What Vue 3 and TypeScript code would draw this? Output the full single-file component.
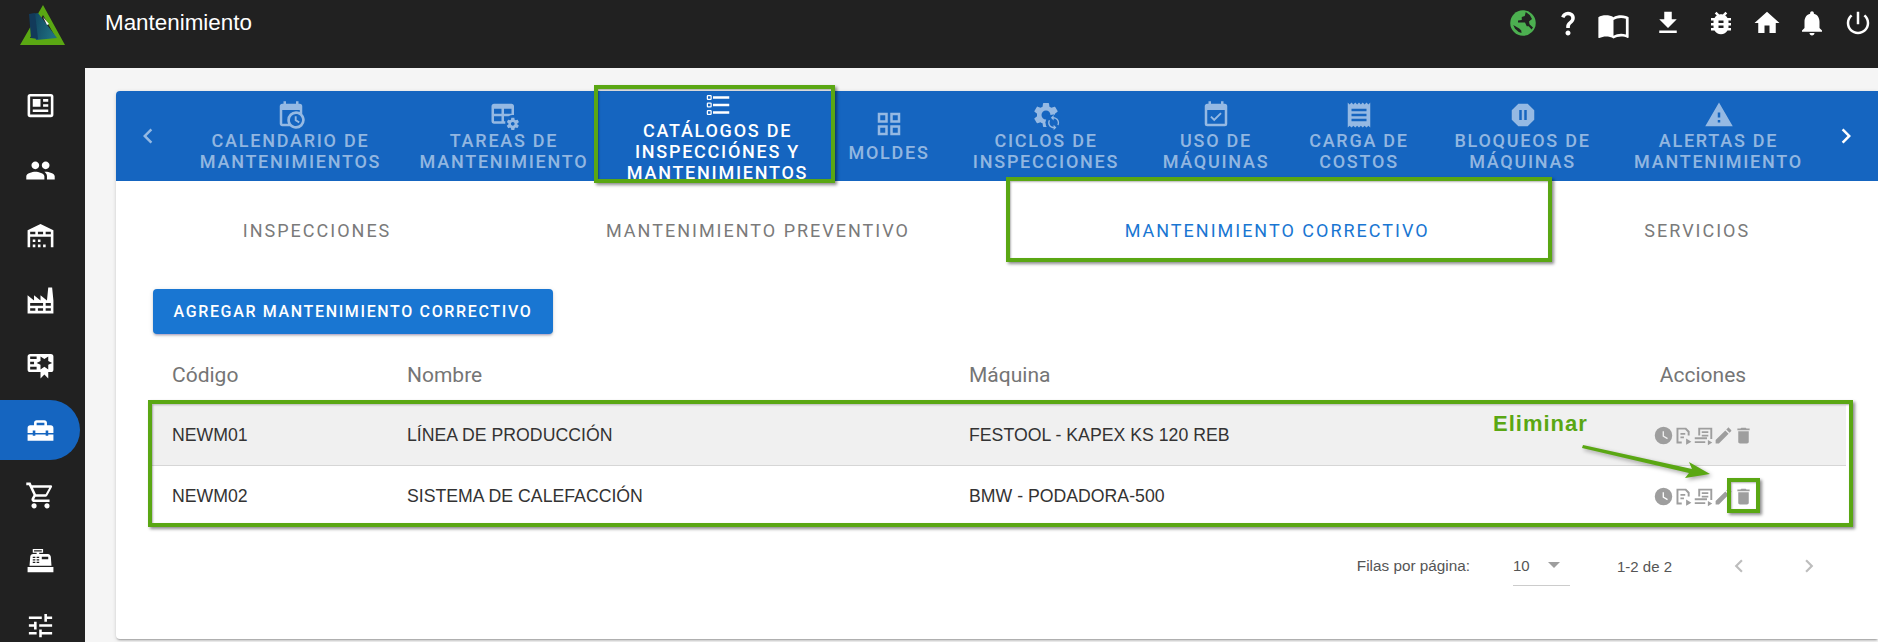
<script setup lang="ts">
interface TabItem { lines: string[]; icon: string; width: number; active?: boolean; cog?: boolean; solo?: boolean }

const I = {
  news: 'M4 3h16a2 2 0 0 1 2 2v14a2 2 0 0 1-2 2H4a2 2 0 0 1-2-2V5a2 2 0 0 1 2-2zm0 2v14h16V5H4zm2 2h6v6H6V7zm8 0h4v2h-4V7zm0 4h4v2h-4v-2zm-8 4h12v2H6v-2z',
  people: 'M16 11c1.66 0 2.99-1.34 2.99-3S17.66 5 16 5c-1.66 0-3 1.34-3 3s1.34 3 3 3zm-8 0c1.66 0 2.99-1.34 2.99-3S9.66 5 8 5C6.34 5 5 6.34 5 8s1.34 3 3 3zm0 2c-2.33 0-7 1.17-7 3.5V19h14v-2.5c0-2.33-4.67-3.5-7-3.5zm8 0c-.29 0-.62.02-.97.05 1.16.84 1.97 1.97 1.97 3.45V19h6v-2.5c0-2.33-4.67-3.5-7-3.5z',
  warehouse: 'M6 19H8V21H6V19M12 3L2 8V21H4V13H20V21H22V8L12 3M8 11H4V9H8V11M14 11H10V9H14V11M20 11H16V9H20V11M6 15H8V17H6V15M10 15H12V17H10V15M10 19H12V21H10V19M14 19H16V21H14V19Z',
  factory: 'M4,18V20H8V18H4M4,14V16H14V14H4M10,18V20H14V18H10M16,14V16H20V14H16M16,18V20H20V18H16M2,22V8L7,12V8L12,12V8L17,12L18,2H21L22,12V22H2Z',
  cert: 'M4,3C2.89,3 2,3.89 2,5V15A2,2 0 0,0 4,17H12V22L15,19L18,22V17H20A2,2 0 0,0 22,15V8L22,6V5A2,2 0 0,0 20,3H16V3H4M12,5L15,7L18,5V8.5L21,10L18,11.5V15L15,13L12,15V11.5L9,10L12,8.5V5M4,5H9V7H4V5M4,9H7V11H4V9M4,13H9V15H4V13Z',
  toolbox: 'M18 16H16V15H8V16H6V15H2V20H22V15H18V16M20 8H17V6C17 4.9 16.1 4 15 4H9C7.9 4 7 4.9 7 6V8H4C2.9 8 2 8.9 2 10V14H6V12H8V14H16V12H18V14H22V10C22 8.9 21.1 8 20 8M15 8H9V6H15V8Z',
  cart: 'M17,18A2,2 0 0,1 19,20A2,2 0 0,1 17,22C15.89,22 15,21.1 15,20C15,18.89 15.89,18 17,18M1,2H4.27L5.21,4H20A1,1 0 0,1 21,5C21,5.17 20.95,5.34 20.88,5.5L17.3,11.97C16.96,12.58 16.3,13 15.55,13H8.1L7.2,14.63L7.17,14.75A0.25,0.25 0 0,0 7.42,15H19V17H7C5.89,17 5,16.1 5,15C5,14.65 5.09,14.32 5.24,14.04L6.6,11.59L3,4H1V2M7,18A2,2 0 0,1 9,20A2,2 0 0,1 7,22C5.89,22 5,21.1 5,20C5,18.89 5.89,18 7,18M16,11L18.78,6H6.14L8.5,11H16Z',
  register: 'M2,17H22V21H2V17M6.25,7H9V6H6V3H14V6H11V7H17.8C18.8,7 19.8,8 20,9L20.5,16H3.5L4.05,9C4.05,8 5.05,7 6.25,7M13,9V11H18V9H13M6,9V10H8V9H6M9,9V10H11V9H9M6,11V12H8V11H6M9,11V12H11V11H9M6,13V14H8V13H6M9,13V14H11V13H9M7,4V5H13V4H7Z',
  tune: 'M3 17v2h6v-2H3zM3 5v2h10V5H3zm10 16v-2h8v-2h-8v-2h-2v6h2zM7 9v2H3v2h4v2h2V9H7zm14 4v-2H11v2h10zm-6-4h2V7h4V5h-4V3h-2v6z',
  calClock: 'M15,13H16.5V15.82L18.94,17.23L18.19,18.53L15,16.69V13M19,8H5V19H9.67C9.24,18.09 9,17.07 9,16A7,7 0 0,1 16,9C17.07,9 18.09,9.24 19,9.67V8M5,21C3.89,21 3,20.1 3,19V5C3,3.89 3.89,3 5,3H6V1H8V3H16V1H18V3H19A2,2 0 0,1 21,5V11.1C22.24,12.36 23,14.09 23,16A7,7 0 0,1 16,23C14.09,23 12.36,22.24 11.1,21H5M16,11.15A4.85,4.85 0 0,0 11.15,16C11.15,18.68 13.32,20.85 16,20.85A4.85,4.85 0 0,0 20.85,16C20.85,13.32 18.68,11.15 16,11.15Z',
  tableCog: 'M4 3H18C19.11 3 20 3.9 20 5V12.08C18.45 11.82 16.92 12.18 15.68 13H12V17H13.08C12.97 17.68 12.97 18.35 13.08 19H4C2.9 19 2 18.11 2 17V5C2 3.9 2.9 3 4 3M4 7V11H10V7H4M12 7V11H18V7H12M4 13V17H10V13H4M23.8 20.4C23.9 20.4 23.9 20.5 23.8 20.6L22.8 22.3C22.7 22.4 22.6 22.4 22.5 22.4L21.3 22C21 22.2 20.8 22.3 20.5 22.5L20.3 23.8C20.3 23.9 20.2 24 20.1 24H18.1C18 24 17.9 23.9 17.8 23.8L17.6 22.5C17.3 22.4 17 22.2 16.8 22L15.6 22.5C15.5 22.5 15.4 22.5 15.3 22.4L14.3 20.7C14.2 20.6 14.3 20.5 14.4 20.4L15.5 19.6V18.6L14.4 17.8C14.3 17.7 14.3 17.6 14.3 17.5L15.3 15.8C15.4 15.7 15.5 15.7 15.6 15.7L16.8 16.2C17.1 16 17.3 15.9 17.6 15.7L17.8 14.4C17.8 14.3 17.9 14.2 18.1 14.2H20.1C20.2 14.2 20.3 14.3 20.3 14.4L20.5 15.7C20.8 15.8 21.1 16 21.4 16.2L22.6 15.7C22.7 15.7 22.9 15.7 22.9 15.8L23.9 17.5C24 17.6 23.9 17.7 23.8 17.8L22.7 18.6V19.6L23.8 20.4M20.5 19C20.5 18.2 19.8 17.5 19 17.5S17.5 18.2 17.5 19 18.2 20.5 19 20.5 20.5 19.8 20.5 19Z',
  listCheck: 'M21,19V17H8V19H21M21,13V11H8V13H21M8,7H21V5H8V7M4,5V7H6V5H4M3,5A1,1 0 0,1 4,4H6A1,1 0 0,1 7,5V7A1,1 0 0,1 6,8H4A1,1 0 0,1 3,7V5M4,11V13H6V11H4M3,11A1,1 0 0,1 4,10H6A1,1 0 0,1 7,11V13A1,1 0 0,1 6,14H4A1,1 0 0,1 3,13V11M4,17V19H6V17H4M3,17A1,1 0 0,1 4,16H6A1,1 0 0,1 7,17V19A1,1 0 0,1 6,20H4C3.45,20 3,19.55 3,19V17Z',
  grid: 'M3 11H11V3H3M5 5H9V9H5M13 21H21V13H13M15 15H19V19H15M3 21H11V13H3M5 15H9V19H5M13 3V11H21V3M19 9H15V5H19Z',
  gear: 'M19.14 12.94c.04-.3.06-.61.06-.94 0-.32-.02-.64-.07-.94l2.03-1.58c.18-.14.23-.41.12-.61l-1.92-3.32c-.12-.22-.37-.29-.59-.22l-2.39.96c-.5-.38-1.03-.7-1.62-.94l-.36-2.54c-.04-.24-.24-.41-.48-.41h-3.84c-.24 0-.43.17-.47.41l-.36 2.54c-.59.24-1.13.57-1.62.94l-2.39-.96c-.22-.08-.47 0-.59.22L2.74 8.87c-.12.21-.08.47.12.61l2.03 1.58c-.05.3-.09.63-.09.94s.02.64.07.94l-2.03 1.58c-.18.14-.23.41-.12.61l1.92 3.32c.12.22.37.29.59.22l2.39-.96c.5.38 1.03.7 1.62.94l.36 2.54c.05.24.24.41.48.41h3.84c.24 0 .44-.17.47-.41l.36-2.54c.59-.24 1.13-.56 1.62-.94l2.39.96c.22.08.47 0 .59-.22l1.92-3.32c.12-.22.07-.47-.12-.61l-2.01-1.58zM12 15.6c-1.98 0-3.6-1.62-3.6-3.6s1.62-3.6 3.6-3.6 3.6 1.62 3.6 3.6-1.62 3.6-3.6 3.6z',
  sync: 'M12 4V1L8 5l4 4V6c3.31 0 6 2.69 6 6 0 1.01-.25 1.97-.7 2.8l1.46 1.46C19.54 15.03 20 13.57 20 12c0-4.42-3.58-8-8-8zm0 14c-3.31 0-6-2.69-6-6 0-1.01.25-1.97.7-2.8L5.24 7.74C4.46 8.97 4 10.43 4 12c0 4.42 3.58 8 8 8v3l4-4-4-4v3z',
  calCheck: 'M19 19H5V8H19M16 1V3H8V1H6V3H5C3.89 3 3 3.89 3 5V19A2 2 0 0 0 5 21H19A2 2 0 0 0 21 19V5A2 2 0 0 0 19 3H18V1M16.53 11.06L15.47 10L10.59 14.88L8.47 12.76L7.41 13.82L10.59 17L16.53 11.06Z',
  receipt: 'M3,22L4.5,20.5L6,22L7.5,20.5L9,22L10.5,20.5L12,22L13.5,20.5L15,22L16.5,20.5L18,22L19.5,20.5L21,22V2L19.5,3.5L18,2L16.5,3.5L15,2L13.5,3.5L12,2L10.5,3.5L9,2L7.5,3.5L6,2L4.5,3.5L3,2M18,9H6V7H18M18,13H6V11H18M18,17H6V15H18V17Z',
  pause: 'M15.73,3L21,8.27V15.73L15.73,21H8.27L3,15.73V8.27L8.27,3H15.73M15,16V8H13V16H15M11,16V8H9V16H11Z',
  warning: 'M1 21h22L12 2 1 21zm12-3h-2v-2h2v2zm0-4h-2v-4h2v4z',
  clock: 'M12,2A10,10 0 0,0 2,12A10,10 0 0,0 12,22A10,10 0 0,0 22,12A10,10 0 0,0 12,2M16.2,16.2L11,13V7H12.5V12.2L17,14.9L16.2,16.2Z',
  doc1: 'M4 3h11l4 4v5h-2.2V8.4L13.8 5.2H6.2v13.6H10V21H4V3zm4.5 6H14v2H8.5V9zm0 4h4v2h-4v-2zM15 15.5l6 3.5-6 3.5v-7z',
  doc2: 'M6 3h16v13h-2.2V5.2H8.2V12H6V3zm4 4h7.5v2H10V7zm0 4h7.5v2H10v-2zM2 14h14v2.2H2V14zm0 4.5h12v2.2H2v-2.2zM17 17l5 3-5 3v-6z',
  pencil: 'M3 17.25V21h3.75L17.81 9.94l-3.75-3.75L3 17.25zM20.71 7.04c.39-.39.39-1.02 0-1.41l-2.34-2.34c-.39-.39-1.02-.39-1.41 0l-1.83 1.83 3.75 3.75 1.83-1.83z',
  trash: 'M6 19c0 1.1.9 2 2 2h8c1.1 0 2-.9 2-2V7H6v12zM19 4h-3.5l-1-1h-5l-1 1H5v2h14V4z',
  globeLand: 'M14.2 3.2 13.4 6.4 11 7.2V9.6L8 10v1.6h5.6L15 14.6h1.6L18.8 17.2 20 15.6 17.2 13 16.8 10.8 19.2 8.8 17.4 5.6zM4.2 13.6 9 16.4 10.6 18 10.8 20 8.6 19.2 5.6 16.6z',
  help: 'M11.07 12.85c.77-1.39 2.25-2.21 3.11-3.44.91-1.29.4-3.7-2.18-3.7-1.69 0-2.52 1.28-2.87 2.34L6.54 6.96C7.25 4.83 9.18 3 11.99 3c2.35 0 3.96 1.07 4.78 2.41.7 1.15 1.11 3.3.03 4.9-1.2 1.77-2.35 2.31-2.97 3.45-.25.46-.35.76-.35 2.24h-2.89c-.01-.78-.13-2.05.48-3.15zM14 20c0 1.1-.9 2-2 2s-2-.9-2-2 .9-2 2-2 2 .9 2 2z',
  book: 'M21 5c-1.11-.35-2.33-.5-3.5-.5-1.95 0-4.05.4-5.5 1.5-1.45-1.1-3.55-1.5-5.5-1.5S2.45 4.9 1 6v14.65c0 .25.25.5.5.5.1 0 .15-.05.25-.05C3.1 20.45 5.05 20 6.5 20c1.95 0 4.05.4 5.5 1.5 1.35-.85 3.8-1.5 5.5-1.5 1.65 0 3.35.3 4.75 1.05.1.05.15.05.25.05.25 0 .5-.25.5-.5V6c-.6-.45-1.25-.75-2-1zm0 13.5c-1.1-.35-2.3-.5-3.5-.5-1.7 0-4.15.65-5.5 1.5V8c1.35-.85 3.8-1.5 5.5-1.5 1.2 0 2.4.15 3.5.5v11.5z',
  download: 'M19 9h-4V3H9v6H5l7 7 7-7zM5 18v2h14v-2H5z',
  bug: 'M20 8h-2.81c-.45-.78-1.07-1.45-1.82-1.96L17 4.41 15.59 3l-2.17 2.17C12.96 5.06 12.49 5 12 5c-.49 0-.96.06-1.41.17L8.41 3 7 4.41l1.62 1.63C7.88 6.55 7.26 7.22 6.81 8H4v2h2.09c-.05.33-.09.66-.09 1v1H4v2h2v1c0 .34.04.67.09 1H4v2h2.81c1.04 1.79 2.97 3 5.19 3s4.15-1.21 5.19-3H20v-2h-2.09c.05-.33.09-.66.09-1v-1h2v-2h-2v-1c0-.34-.04-.67-.09-1H20V8zm-6 8h-4v-2h4v2zm0-4h-4v-2h4v2z',
  home: 'M10 20v-6h4v6h5v-8h3L12 3 2 12h3v8z',
  bell: 'M12 22c1.1 0 2-.9 2-2h-4c0 1.1.89 2 2 2zm6-6v-5c0-3.07-1.64-5.64-4.5-6.32V4c0-.83-.67-1.5-1.5-1.5s-1.5.67-1.5 1.5v.68C7.63 5.36 6 7.92 6 11v5l-2 2v1h16v-1l-2-2z',
  power: 'M13 3h-2v10h2V3zm4.83 2.17l-1.42 1.42C17.99 7.86 19 9.81 19 12c0 3.87-3.13 7-7 7s-7-3.13-7-7c0-2.19 1.01-4.14 2.58-5.42L6.17 5.17C4.23 6.82 3 9.26 3 12c0 4.97 4.03 9 9 9s9-4.03 9-9c0-2.74-1.23-5.18-3.17-6.83z',
  chevL: 'M15.41 7.41 14 6l-6 6 6 6 1.41-1.41L10.83 12z',
  chevR: 'M10 6 8.59 7.41 13.17 12l-4.58 4.59L10 18l6-6z',
}

const headerIcons = [
  { d: I.help, cls: 'hi-help' }, { d: I.book, cls: 'hi-book' },
  { d: I.download, cls: 'hi-dl' }, { d: I.bug, cls: 'hi-bug' }, { d: I.home, cls: 'hi-home' },
  { d: I.bell, cls: 'hi-bell' }, { d: I.power, cls: 'hi-power' },
]
const navIcons = [I.news, I.people, I.warehouse, I.factory, I.cert, I.toolbox, I.cart, I.register, I.tune]
const activeNav = 5

const tabs: TabItem[] = [
  { lines: ['CALENDARIO DE', 'MANTENIMIENTOS'], icon: I.calClock, width: 221 },
  { lines: ['TAREAS DE', 'MANTENIMIENTO'], icon: I.tableCog, width: 206 },
  { lines: ['CATÁLOGOS DE', 'INSPECCIÓNES Y', 'MANTENIMIENTOS'], icon: I.listCheck, width: 221, active: true },
  { lines: ['MOLDES'], icon: I.grid, width: 122, solo: true },
  { lines: ['CICLOS DE', 'INSPECCIONES'], icon: I.gear, width: 192, cog: true },
  { lines: ['USO DE', 'MÁQUINAS'], icon: I.calCheck, width: 148 },
  { lines: ['CARGA DE', 'COSTOS'], icon: I.receipt, width: 138 },
  { lines: ['BLOQUEOS DE', 'MÁQUINAS'], icon: I.pause, width: 189 },
  { lines: ['ALERTAS DE', 'MANTENIMIENTO'], icon: I.warning, width: 203 },
]
const subTabs = ['INSPECCIONES', 'MANTENIMIENTO PREVENTIVO', 'MANTENIMIENTO CORRECTIVO', 'SERVICIOS']
const rows = [
  { code: 'NEWM01', name: 'LÍNEA DE PRODUCCIÓN', machine: 'FESTOOL - KAPEX KS 120 REB' },
  { code: 'NEWM02', name: 'SISTEMA DE CALEFACCIÓN', machine: 'BMW - PODADORA-500' },
]
const actions = [I.clock, I.doc1, I.doc2, I.pencil, I.trash]
</script>

<template>
  <div class="app">
    <header class="topbar">
      <div class="logo-cell">
        <svg class="logo" viewBox="0 0 45 40" width="45" height="40">
          <defs>
            <linearGradient id="sail" x1="0" y1="0" x2="1" y2="0.3">
              <stop offset="0" stop-color="#0f3f5c" />
              <stop offset="1" stop-color="#1f6f80" />
            </linearGradient>
          </defs>
          <path d="M23 0 45 40H0L23 0zm0 10L10 33h26L23 10z" fill="#5aa713" fill-rule="evenodd" />
          <path d="M11 9 18 8 37 33 16 35z" fill="url(#sail)" />
          <path d="M9 9 15 8 18 34 11 33z" fill="#123a5a" />
          <path d="M23 12 29 19 27 20z" fill="#fff" />
        </svg>
      </div>
      <div class="title">Mantenimiento</div>
      <div class="top-icons">
        <svg class="top-icon hi-globe" viewBox="0 0 24 24">
          <circle cx="12" cy="12" r="10.2" fill="#4caf50" />
          <path :d="I.globeLand" fill="#212121" />
        </svg>
        <svg v-for="h in headerIcons" :key="h.cls" :class="['top-icon', h.cls]" viewBox="0 0 24 24"><path :d="h.d" /></svg>
      </div>
    </header>

    <div class="body">
      <nav class="sidebar">
        <div v-for="(d, i) in navIcons" :key="i" :class="['nav-item', { active: i === activeNav }]">
          <svg viewBox="0 0 24 24" width="31" height="31"><path :d="d" fill="#fff" /></svg>
        </div>
      </nav>

      <main class="main">
        <section class="card">
          <div class="tabbar">
            <div class="chev chev-dim"><svg viewBox="0 0 24 24" width="30" height="30"><path :d="I.chevL" /></svg></div>
            <div v-for="t in tabs" :key="t.lines[0]" :class="['tab', { active: t.active, solo: t.solo }]" :style="{ width: t.width + 'px' }">
              <svg class="tab-icon" viewBox="0 0 24 24">
                <path :d="t.icon" />
                <template v-if="t.cog">
                  <circle cx="18" cy="18" r="6.5" fill="#1565c0" />
                  <path :d="I.sync" transform="translate(11.5 11.5) scale(.55)" />
                </template>
              </svg>
              <span v-for="l in t.lines" :key="l" class="tab-line">{{ l }}</span>
            </div>
            <div class="chev chev-right"><svg viewBox="0 0 24 24" width="30" height="30"><path :d="I.chevR" /></svg></div>
          </div>

          <div class="subtabs">
            <div v-for="(s, i) in subTabs" :key="s" :class="['subtab', { on: i === 2 }]">{{ s }}</div>
          </div>

          <button class="add-btn" type="button">AGREGAR MANTENIMIENTO CORRECTIVO</button>

          <div class="table">
            <div class="row head">
              <div>Código</div><div>Nombre</div><div>Máquina</div><div class="act-cell">Acciones</div>
            </div>
            <div v-for="(r, i) in rows" :key="r.code" :class="['row', 'data', { hl: i === 0 }]">
              <div>{{ r.code }}</div><div>{{ r.name }}</div><div>{{ r.machine }}</div>
              <div class="act-cell icons">
                <svg v-for="(a, j) in actions" :key="j" viewBox="0 0 24 24" width="21" height="21"><path :d="a" fill="#9e9e9e" /></svg>
              </div>
            </div>
          </div>

          <div class="pager">
            <span class="pg-label">Filas por página:</span>
            <div class="pg-select"><span>10</span><i class="caret"></i></div>
            <span class="pg-range">1-2 de 2</span>
            <svg class="pg-prev" viewBox="0 0 24 24" width="26" height="26"><path :d="I.chevL" fill="#bdbdbd" /></svg>
            <svg class="pg-next" viewBox="0 0 24 24" width="26" height="26"><path :d="I.chevR" fill="#bdbdbd" /></svg>
          </div>
        </section>
      </main>
    </div>

    <!-- annotation layer drawn on top of the screenshot -->
    <div class="mark m-tab"></div>
    <div class="mark m-sub"></div>
    <div class="mark m-rows"></div>
    <div class="mark m-trash"></div>
    <div class="note">Eliminar</div>
    <svg class="arrow" viewBox="0 0 140 40" width="140" height="40">
      <path d="M3 3 112 27 109 20 130 32 105 36 109 31 2 6z" fill="#5aa713" />
    </svg>
  </div>
</template>

<style>
html, body { margin: 0; background: #f5f5f5; }
</style>

<style scoped>
.app { position: relative; width: 1878px; height: 642px; overflow: hidden; font-family: Roboto, "Liberation Sans", sans-serif; background: #f5f5f5; }
.topbar { display: flex; align-items: flex-start; height: 68px; background: #212121; color: #fff; }
.logo-cell { width: 105px; padding: 5px 0 0 20px; box-sizing: border-box; flex: none; }
.logo { display: block; }
.title { font-family: "Liberation Sans", Arial, sans-serif; font-size: 22.4px; line-height: 26px; margin-top: 10px; }
.top-icons { margin-left: auto; display: flex; align-items: center; height: 46px; padding-right: 5px; }
.top-icon { fill: #fff; width: 30px; height: 30px; display: block; margin-left: 15.5px; }
.hi-globe { margin-left: 0; }
.hi-help { margin-left: 15px; }
.hi-book { width: 33px; height: 33px; margin-left: 14px; position: relative; top: 2px; }
.hi-dl { margin-left: 23px; }
.hi-bug { margin-left: 23px; }
.hi-home { margin-left: 16px; }
.hi-bell { margin-left: 15px; }
.hi-power { margin-left: 16px; }

.body { display: flex; height: 574px; }
.sidebar { width: 85px; flex: none; background: #212121; padding-top: 7px; box-sizing: border-box; }
.nav-item { width: 80px; height: 60px; margin-bottom: 5px; display: flex; align-items: center; justify-content: center; border-radius: 0 30px 30px 0; }
.nav-item.active { background: #1565c0; }
.main { flex: 1; min-width: 0; padding: 23px 0 0 31px; box-sizing: border-box; }
.card { background: #fff; height: 548px; border-radius: 4px 0 0 4px; box-shadow: 0 2px 2px -1px rgba(0,0,0,.3), 0 1px 4px rgba(0,0,0,.14); overflow: hidden; }

.tabbar { display: flex; height: 90px; background: #1565c0; overflow: hidden; position: relative; }
.chev { flex: none; width: 64px; display: flex; align-items: center; justify-content: center; }
.chev svg { display: block; }
.chev-dim { fill: rgba(255,255,255,.55); }
.chev-right { fill: #fff; position: absolute; right: 0; top: 0; bottom: 0; }
.tab { flex: none; display: flex; flex-direction: column; align-items: center; justify-content: center; color: rgba(255,255,255,.55); fill: rgba(255,255,255,.55); font-size: 18px; font-weight: 500; line-height: 21px; letter-spacing: 1.75px; }
.tab.active { color: #fff; fill: #fff; }
.tab.solo { padding-top: 2px; }
.tab.solo .tab-icon { margin-top: -3px; margin-bottom: 3px; }
.tab-icon { width: 30px; height: 30px; flex: none; }
.tab-line { white-space: nowrap; }

.subtabs { display: flex; height: 98px; margin: 0 20.5px 0 19.5px; }
.subtab { flex: 1 1 auto; padding: 0 100px; display: flex; align-items: center; justify-content: center; font-size: 18px; letter-spacing: 2px; color: #7a7a7a; white-space: nowrap; }
.subtab.on { color: #1976d2; }

.add-btn { display: block; margin: 10px 0 0 37px; width: 400px; height: 45px; border: 0; border-radius: 4px; background: #1976d2; color: #fff; font-family: inherit; font-weight: 500; font-size: 16px; letter-spacing: 1.65px; padding: 0; box-shadow: 0 3px 1px -2px rgba(120,60,200,.2), 0 2px 2px rgba(0,0,0,.14), 0 1px 5px rgba(0,0,0,.12); }

.table { margin: 11px 0 0 36px; width: 1694px; }
.row { display: grid; grid-template-columns: 235px 562px 654px 1fr; align-items: center; }
.row > div { padding-left: 20px; }
.row.head { height: 60px; font-size: 21px; color: #757575; }
.row.data { height: 61px; font-family: "Liberation Sans", Arial, sans-serif; font-size: 17.7px; color: #333; box-sizing: border-box; }
.row.hl { background: #f0f0f0; border-bottom: 1px solid #d6d6d6; }
.row > .act-cell { padding: 0 43px 0 0; text-align: center; }
.icons { display: flex; justify-content: center; }
.icons svg { display: block; margin: 0 -.5px; }

.pager { display: flex; align-items: center; height: 40px; margin-top: 19px; justify-content: flex-end; padding-right: 56px; font-family: "Liberation Sans", Arial, sans-serif; font-size: 15px; color: #555; }
.pg-label { font-size: 15.3px; }
.pg-select { margin-left: 43px; width: 57px; height: 40px; border-bottom: 1px solid #ccc; box-sizing: border-box; display: flex; align-items: center; position: relative; }
.caret { position: absolute; left: 35px; top: 16px; width: 0; height: 0; border-left: 6px solid transparent; border-right: 6px solid transparent; border-top: 6px solid #9e9e9e; }
.pg-range { margin-left: 47px; }
.pg-prev { margin-left: 54px; }
.pg-next { margin-left: 44px; }

.mark { position: absolute; border: 4px solid #5aa713; box-sizing: border-box; box-shadow: 2px 2px 3px rgba(0,0,0,.45), inset 1px 1px 2px rgba(0,0,0,.3); }
.m-tab { left: 594px; top: 85px; width: 241px; height: 98px; }
.m-sub { left: 1006px; top: 177px; width: 546px; height: 85px; }
.m-rows { left: 148px; top: 400px; width: 1705px; height: 127px; }
.m-trash { left: 1727px; top: 478px; width: 33px; height: 35px; }
.note { position: absolute; left: 1493px; top: 410px; font-family: "Liberation Sans", Arial, sans-serif; font-weight: bold; font-size: 22px; line-height: 28px; letter-spacing: 1px; color: #5aa713; }
.arrow { position: absolute; left: 1580px; top: 442px; filter: drop-shadow(2px 2px 2px rgba(0,0,0,.35)); }
</style>
